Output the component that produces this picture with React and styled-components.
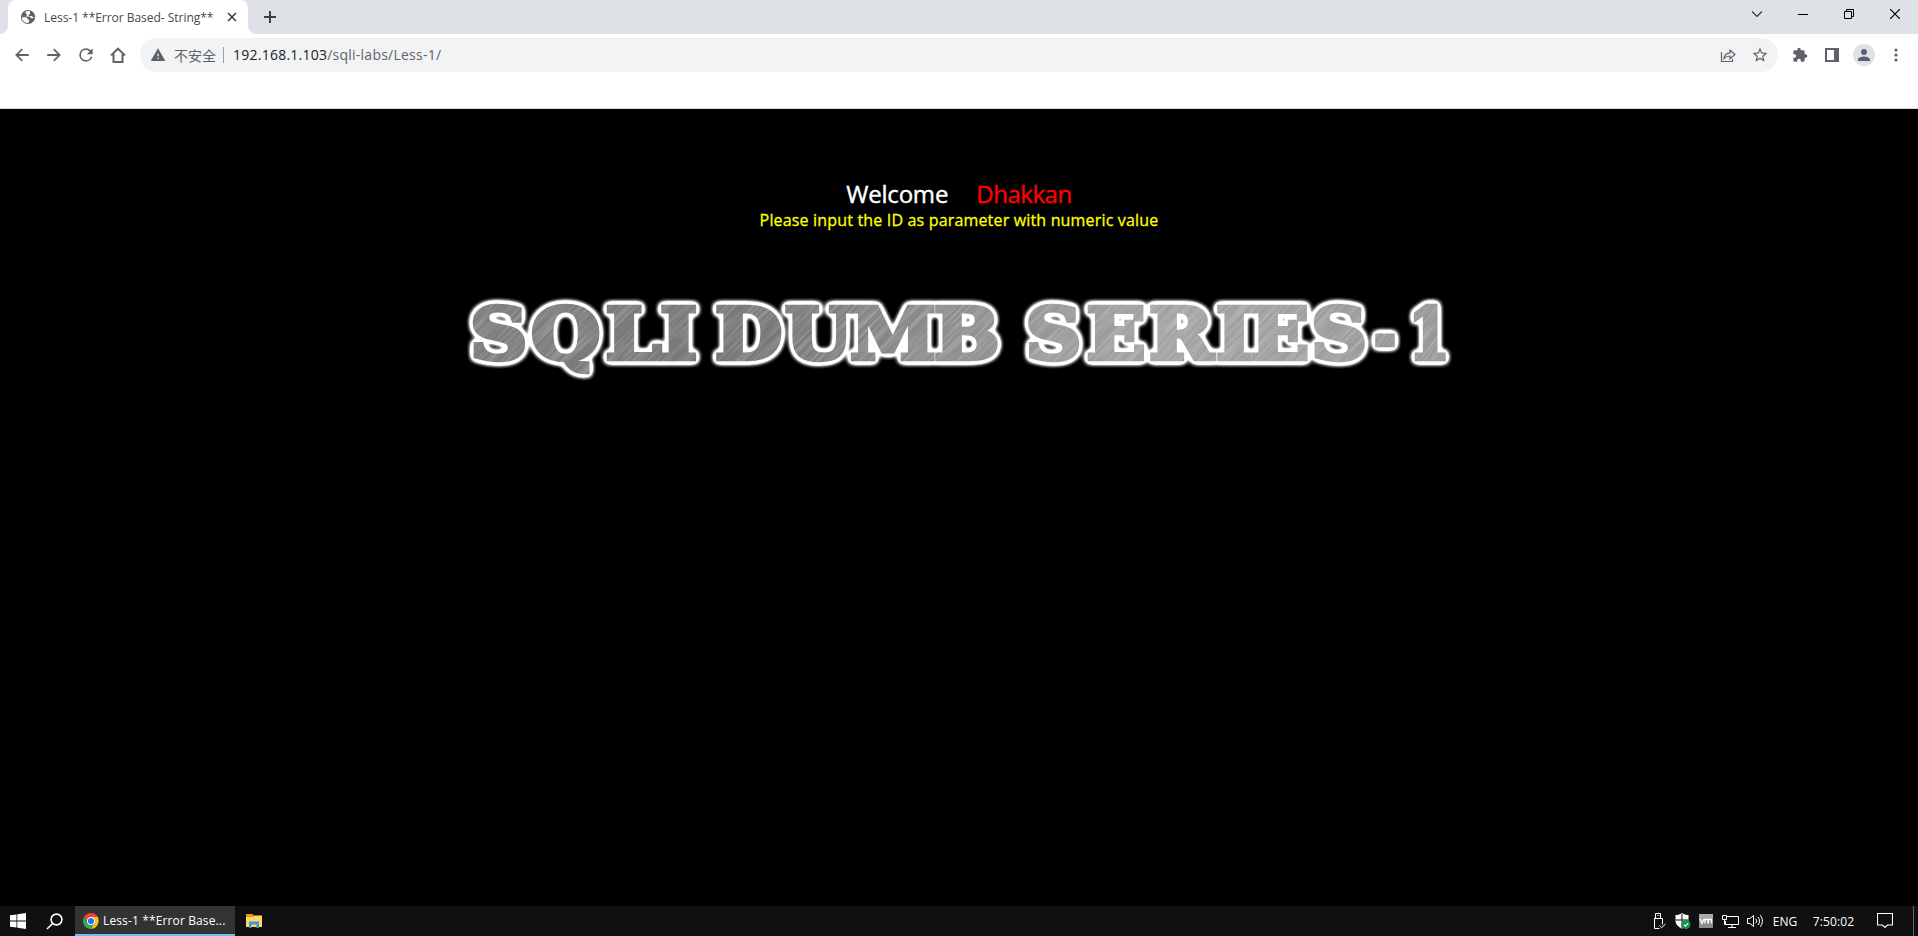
import React from 'react';
import styled, { createGlobalStyle } from 'styled-components';

const Global = createGlobalStyle`
  * { box-sizing: border-box; }
  html, body { margin: 0; padding: 0; background: #000; overflow: hidden; }
  body { font-family: "Open Sans", "Noto Sans", "Noto Sans CJK SC", sans-serif; }
  svg { display: block; flex: none; }
`;

const Screen = styled.div`
  display: flex;
  flex-direction: column;
  width: 100%;
  height: 100vh;
  min-height: 936px;
`;

const TabStrip = styled.header`
  display: flex;
  height: 34px;
  padding-left: 8px;
  background: #dee1e6;
`;

const Tab = styled.div`
  position: relative;
  display: flex;
  align-items: center;
  width: 240px;
  height: 34px;
  padding: 0 9px 0 12px;
  background: #fff;
  border-radius: 8px 8px 0 0;
  &::before, &::after {
    content: '';
    position: absolute;
    bottom: 0;
    width: 8px;
    height: 8px;
  }
  &::before { left: -8px; background: radial-gradient(circle at 0 0, transparent 7.5px, #fff 8px); }
  &::after { right: -8px; background: radial-gradient(circle at 100% 0, transparent 7.5px, #fff 8px); }
`;

const TabTitle = styled.span`
  flex: 1;
  margin-left: 8px;
  font-size: 12px;
  line-height: 18px;
  letter-spacing: -0.03px;
  color: #45484c;
  white-space: nowrap;
  padding-top: 1px;
`;

const IconSlot = styled.span`
  display: flex;
  align-items: center;
  justify-content: center;
  flex: none;
  width: ${(p) => p.$w || 32}px;
  height: ${(p) => p.$h || 28}px;
  color: ${(p) => p.$color || '#5f6368'};
`;

const WindowControls = styled.div`
  display: flex;
  height: 28px;
  margin-left: auto;
`;

const Toolbar = styled.nav`
  display: flex;
  align-items: flex-start;
  height: 75px;
  padding: 4px 6px 0;
  background: #fff;
  border-bottom: 1px solid #dadce0;
`;

const NavButtons = styled.div`
  display: flex;
  align-items: center;
  width: 134px;
  height: 34px;
`;

const Omnibox = styled.div`
  display: flex;
  align-items: center;
  flex: 1;
  height: 34px;
  padding: 0 2px 0 10px;
  border-radius: 17px;
  background: #f1f3f4;
  color: #5f6368;
`;

const Insecure = styled.span`
  margin-left: 8px;
  padding-right: 7px;
  border-right: 1px solid #9aa0a6;
  font: 14px/16px "Noto Sans CJK SC", sans-serif;
  color: #5f6368;
  white-space: nowrap;
`;

const Url = styled.span`
  flex: 1;
  margin-left: 9px;
  font-size: 14px;
  line-height: 20px;
  letter-spacing: 0.24px;
  color: #5f6368;
  white-space: nowrap;
`;

const Host = styled.span`
  color: #202124;
`;

const Actions = styled.div`
  display: flex;
  align-items: center;
  height: 34px;
  margin-left: 6px;
`;

const Avatar = styled.span`
  display: flex;
  align-items: center;
  justify-content: center;
  width: 22px;
  height: 22px;
  border-radius: 50%;
  background: #dee1e6;
  color: #56617a;
`;

const Page = styled.main`
  display: flex;
  flex: 1;
  flex-direction: column;
  align-items: center;
  padding-top: 69px;
  background: #000;
`;

const Welcome = styled.div`
  display: flex;
  gap: 28px;
  font-size: 24px;
  letter-spacing: -0.2px;
  line-height: 32px;
  color: #fff;
  -webkit-text-stroke: 0.4px currentColor;
`;

const Name = styled.span`
  letter-spacing: -0.45px;
  color: #f00;
`;

const Hint = styled.div`
  font-size: 16px;
  line-height: 21px;
  letter-spacing: 0.17px;
  color: #ff0;
  -webkit-text-stroke: 0.3px currentColor;
`;

const Banner = styled.svg`
  margin-top: 54px;
  font-family: "DejaVu Serif", serif;
  font-weight: 700;
  font-size: 70.5px;
`;

const Taskbar = styled.footer`
  display: flex;
  align-items: center;
  height: 30px;
  background: #101010;
  color: #fff;
`;

const Task = styled.div`
  display: flex;
  align-items: center;
  width: 160px;
  height: 30px;
  padding: 1px 0 0 8px;
  gap: 4px;
  background: #333;
  border-bottom: 2px solid #76b9ed;
  font-size: 12px;
  letter-spacing: 0.13px;
  white-space: nowrap;
`;

const Tray = styled.div`
  display: flex;
  align-items: center;
  height: 30px;
  margin-left: auto;
  font-size: 12px;
`;

const TrayText = styled.span`
  width: ${(p) => p.$w}px;
  text-align: center;
  letter-spacing: 0.1px;
  white-space: nowrap;
`;

const PeekEdge = styled.span`
  width: 5px;
  height: 30px;
  border-left: 1px solid #6a6a6a;
`;

const Glyph = ({ d, size = 20 }) => (
  <svg width={size} height={size} viewBox="0 0 24 24" fill="currentColor"><path d={d} /></svg>
);

const icons = {
  back: 'M21 10.700H7.400l5.700-5.700L11.500 3.400 2.800 12l8.700 8.600 1.600-1.600-5.700-5.700H21z',
  forward: 'M3 13.300h13.600l-5.700 5.700 1.600 1.600L21.200 12l-8.700-8.600-1.600 1.600 5.700 5.700H3z',
  reload: 'M17.65 6.35A7.96 7.96 0 0 0 12 4a8 8 0 1 0 7.73 10h-2.08A6 6 0 1 1 12 6c1.66 0 3.14.69 4.22 1.78L13 11h7V4z',
  star: 'M22 9.24l-7.19-.62L12 2 9.19 8.63 2 9.24l5.46 4.73L5.82 21 12 17.27 18.18 21l-1.63-7.03zM12 15.4l-3.76 2.27 1-4.28-3.32-2.88 4.38-.38L12 6.1l1.71 4.04 4.38.38-3.32 2.88 1 4.28z',
  warn: 'M1 21h22L12 2zm12-3h-2v-2h2zm0-4h-2v-4h2z',
  puzzle: 'M20.5 11H19V7a2 2 0 0 0-2-2h-4V3.5a2.5 2.5 0 0 0-5 0V5H4a2 2 0 0 0-2 2v3.8h1.5a2.7 2.7 0 0 1 0 5.4H2V20a2 2 0 0 0 2 2h3.8v-1.5a2.7 2.7 0 0 1 5.4 0V22H17a2 2 0 0 0 2-2v-4h1.5a2.5 2.5 0 0 0 0-5z',
  person: 'M12 12a4 4 0 1 0 0-8 4 4 0 0 0 0 8zm0 2c-2.67 0-8 1.34-8 4v2h16v-2c0-2.66-5.33-4-8-4z',
};

const Globe = () => (
  <svg width="16" height="16" viewBox="0 0 16 16">
    <circle cx="8" cy="8" r="7.1" fill="#5f6368" />
    <path d="M1.900 8.300h3.300c1.700 0 2.300.9 2.300 2.200h1.600v1.700c0 .8-.8.9-1 1.900C4.400 14.100 1.900 11.500 1.900 8.300z" fill="#fff" />
    <path d="M8 2c-.9 0-1.700.2-2.400.5v1.300c0 .8.700 1.200 1.500 1.200v1.400c-1 0-1.400.5-1.400 1.200h3.700c1.100 0 1.400.8 1.400 1.700h1.300c.9 0 1.500-.5 1.900-.8C14.200 5 11.500 2 8 2z" fill="#fff" />
    <path d="M10 2v2.300c0 1-.7 1.400-1.400 1.600v1.200h2.900c.8 0 1 .6 1.100 1.200H15C15 5 12.500 2.500 10 2z" fill="#5f6368" />
  </svg>
);

const Chrome = () => (
  <svg width="16" height="16" viewBox="0 0 48 48">
    <path d="M24 12h20.800A24 24 0 0 0 3.200 12L14 30z" fill="#ea4335" />
    <path d="M34 30L24 48c16 0 28-18 20.800-36H24z" fill="#fbc116" />
    <path d="M14 30L3.200 12A24 24 0 0 0 24 48l10-18z" fill="#34a853" />
    <circle cx="24" cy="24" r="12" fill="#fff" />
    <circle cx="24" cy="24" r="9.300" fill="#2674f2" />
  </svg>
);

/* A run of letters; `at` lists the left edge of each glyph, `stretch` widens them. */
const Run = ({ children, at, stretch = 1 }) => (
  <text transform={`scale(${stretch} 1)`} y="359.300" x={at.map((v) => (v / stretch).toFixed(2)).join(' ')}>{children}</text>
);

const MetalBanner = () => (
  <Banner width="1000" height="100" viewBox="459 285 1000 100">
    <defs>
      <filter id="grain" x="0" y="0" width="100%" height="100%">
        <feTurbulence type="fractalNoise" baseFrequency=".02 .45" numOctaves="2" seed="4" />
        <feColorMatrix values="0 0 0 0 1  0 0 0 0 1  0 0 0 0 1  1.200 0 0 0 -.450" />
      </filter>
      <linearGradient id="steel" gradientUnits="userSpaceOnUse" x1="0" y1="0" x2="1000" y2="0">
        <stop offset="0" stopColor="#7c7c7c" />
        <stop offset=".3" stopColor="#777" />
        <stop offset=".42" stopColor="#888" />
        <stop offset=".65" stopColor="#a2a2a2" />
        <stop offset="1" stopColor="#969696" />
      </linearGradient>
      <pattern id="brushed" patternUnits="userSpaceOnUse" x="400" y="285" width="1600" height="100">
        <rect width="1600" height="100" fill="url(#steel)" />
        <g transform="rotate(-48 800 50)">
          <rect x="0" y="-800" width="1600" height="1700" filter="url(#grain)" opacity=".45" />
        </g>
      </pattern>
      <filter id="halo" filterUnits="userSpaceOnUse" x="300" y="285" width="1200" height="100" colorInterpolationFilters="sRGB">
        <feGaussianBlur in="SourceAlpha" stdDeviation="3" />
        <feComponentTransfer><feFuncA type="linear" slope="6.500" intercept="-.05" /></feComponentTransfer>
        <feColorMatrix values="0 0 0 0 1  0 0 0 0 1  0 0 0 0 1  0 0 0 1 0" result="glow" />
        <feMerge><feMergeNode in="glow" /><feMergeNode in="SourceGraphic" /></feMerge>
      </filter>
    </defs>
    <g filter="url(#halo)" fill="url(#brushed)" stroke="url(#brushed)" strokeWidth="4.400">
      <Run stretch={1.13} at={[470, 531, 605.5, 660]}>SQLI</Run>
      <Run stretch={1.1} at={[715, 785, 850, 934]}>DUMB</Run>
      <Run stretch={1.1} at={[1025.5, 1086.500, 1149, 1216, 1250, 1311]}>SERIES</Run>
      <Run stretch={0.75} at={[1374]}>-</Run>
      <Run stretch={0.84} at={[1408.500]}>1</Run>
    </g>
  </Banner>
);

export default function App() {
  return (
    <Screen>
      <Global />
      <TabStrip>
        <Tab>
          <Globe />
          <TabTitle>Less-1 **Error Based- String**</TabTitle>
          <IconSlot $w={14} $color="#3c4043">
            <svg width="10" height="10" viewBox="0 0 10 10" stroke="currentColor" strokeWidth="1.600"><path d="M1 1l8 8M9 1L1 9" /></svg>
          </IconSlot>
        </Tab>
        <IconSlot $w={44} $h={28} $color="#3c4043">
          <svg width="12" height="12" viewBox="0 0 12 12" stroke="currentColor" strokeWidth="2" style={{ marginTop: 6 }}><path d="M6 0v12M0 6h12" /></svg>
        </IconSlot>
        <WindowControls>
          <IconSlot $w={46} $color="#333"><svg width="12" height="8" viewBox="0 0 12 8" fill="none" stroke="currentColor" strokeWidth="1.100"><path d="M1 1.500l5 5 5-5" /></svg></IconSlot>
          <IconSlot $w={46} $color="#000"><svg width="10" height="10" viewBox="0 0 10 10"><path d="M0 5h10v1H0z" /></svg></IconSlot>
          <IconSlot $w={46} $color="#000"><svg width="10" height="10" viewBox="0 0 10 10" fill="none" stroke="currentColor"><path d="M.5 2.500h7v7h-7zM2.500 2.500v-2h7v7h-2" /></svg></IconSlot>
          <IconSlot $w={46} $color="#000"><svg width="10" height="10" viewBox="0 0 10 10" stroke="currentColor" strokeWidth="1.200"><path d="M0 0l10 10M10 0L0 10" /></svg></IconSlot>
        </WindowControls>
      </TabStrip>
      <Toolbar>
        <NavButtons>
          <IconSlot><Glyph d={icons.back} size={18} /></IconSlot>
          <IconSlot><Glyph d={icons.forward} size={18} /></IconSlot>
          <IconSlot><Glyph d={icons.reload} size={20} /></IconSlot>
          <IconSlot>
            <svg width="16" height="16" viewBox="0 0 16 16" fill="none" stroke="currentColor" strokeWidth="2"><path d="M1 8.400L8 1.700l7 6.700M3.500 7v8h9V7" /></svg>
          </IconSlot>
        </NavButtons>
        <Omnibox>
          <Glyph d={icons.warn} size={16} />
          <Insecure>不安全</Insecure>
          <Url><Host>192.168.1.103</Host>/sqli-labs/Less-1/</Url>
          <IconSlot>
            <svg width="16" height="16" viewBox="0 0 16 16" fill="none" stroke="currentColor" strokeWidth="1.200"><path d="M1.500 5v9.500h11v-2.500" /><path d="M4 11.500c.3-3.500 2-5.500 6-5.700V3l5 4.500-5 4.200V9c-3 0-4.500.8-6 2.500z" /></svg>
          </IconSlot>
          <IconSlot><Glyph d={icons.star} size={18} /></IconSlot>
        </Omnibox>
        <Actions>
          <IconSlot><Glyph d={icons.puzzle} size={16} /></IconSlot>
          <IconSlot><svg width="14" height="14" viewBox="0 0 14 14"><path d="M0 0h14v14H0zM2 2v10h7V2z" fill="currentColor" fillRule="evenodd" /></svg></IconSlot>
          <IconSlot><Avatar><Glyph d={icons.person} size={18} /></Avatar></IconSlot>
          <IconSlot><svg width="4" height="14" viewBox="0 0 4 14" fill="currentColor"><circle cx="2" cy="2" r="1.600" /><circle cx="2" cy="7" r="1.600" /><circle cx="2" cy="12" r="1.600" /></svg></IconSlot>
        </Actions>
      </Toolbar>
      <Page>
        <Welcome><span>Welcome</span><Name>Dhakkan</Name></Welcome>
        <Hint>Please input the ID as parameter with numeric value</Hint>
        <MetalBanner />
      </Page>
      <Taskbar>
        <IconSlot $w={36} $color="#fff">
          <svg width="16" height="16" viewBox="0 0 16 16" fill="currentColor"><path d="M0 2.300l6.500-.9v6.100H0zM7.300 1.300L16 0v7.500H7.300zM0 8.400h6.500v6.200L0 13.700zM7.300 8.400H16V16l-8.700-1.300z" /></svg>
        </IconSlot>
        <IconSlot $w={36} $color="#fff">
          <svg width="17" height="17" viewBox="0 0 17 17" fill="none" stroke="currentColor" strokeWidth="1.600"><circle cx="10.500" cy="6.500" r="5.400" /><path d="M6.700 10.500L1 16" /></svg>
        </IconSlot>
        <IconSlot $w={3} />
        <Task><Chrome /><span>Less-1 **Error Base...</span></Task>
        <IconSlot $w={38}>
          <svg width="16" height="14" viewBox="0 0 16 14"><path d="M0 0h6.500l1.500 2v2H0z" fill="#dda013" /><path d="M0 3h7l1-1.500h8V13H0z" fill="#ffd767" /><path d="M3 14V7.500h10V14h-2.500v-3.500h-5V14z" fill="#3c96df" /></svg>
        </IconSlot>
        <Tray>
          <IconSlot $w={23} $color="#fff">
            <svg width="13" height="16" viewBox="0 0 13 16" fill="none" stroke="currentColor"><path d="M2.500 5V.5h5V5M1 5.500h8.500v6M1.500 5v10.500h5M6.500 12.500l2.200 2.200 3.800-3.700" /><path d="M4 2.500h.8M5.600 2.500h.8" /></svg>
          </IconSlot>
          <IconSlot $w={23}>
            <svg width="16" height="16" viewBox="0 0 16 16"><path d="M7 0c2 1.600 4 2 6.500 2v5.500c0 4-3 6.500-6.500 8-3.500-1.500-6.500-4-6.500-8V2C3 2 5 1.600 7 0z" fill="#fff" /><path d="M7 1v14M.5 7h13" stroke="#101010" /><circle cx="11" cy="11.500" r="4.500" fill="#179149" /><path d="M8.900 11.600l1.500 1.600 2.800-3" fill="none" stroke="#fff" strokeWidth="1.100" /></svg>
          </IconSlot>
          <IconSlot $w={24}>
            <svg width="14" height="14" viewBox="0 0 14 14"><path d="M0 0h14v14H0z" fill="#8c8c8c" /><path d="M0 0h14v4L0 7z" fill="#aaa" /><path d="M1 5l2 4.500L5 5M6 9.500V5.500h3v4M9.500 9.500v-4h3v4" fill="none" stroke="#fff" strokeWidth="1.300" /></svg>
          </IconSlot>
          <IconSlot $w={25} $color="#fff">
            <svg width="17" height="15" viewBox="0 0 17 15" fill="none" stroke="currentColor"><path d="M5 2.500h11.500v8H3.500V7M10 10.500v3M6 13.500h8M.5 1.500h4v4h-4zM2.500 5.500v5h2" /></svg>
          </IconSlot>
          <IconSlot $w={24} $color="#fff">
            <svg width="17" height="14" viewBox="0 0 17 14" fill="none" stroke="currentColor"><path d="M.5 4.500H3l3.500-3v11L3 9.500H.5zM8.700 4.800a3 3 0 0 1 0 4.400M11 3a6 6 0 0 1 0 8M13.300 1.200a9 9 0 0 1 0 11.600" /></svg>
          </IconSlot>
          <TrayText $w={36}>ENG</TrayText>
          <TrayText $w={61}>7:50:02</TrayText>
          <IconSlot $w={41} $color="#fff">
            <svg width="16" height="16" viewBox="0 0 16 16" fill="none" stroke="currentColor" strokeWidth="1.100"><path d="M.5.5h15v11.500h-5L8 14.500 5.500 12h-5z" /></svg>
          </IconSlot>
          <IconSlot $w={8} />
          <PeekEdge />
        </Tray>
      </Taskbar>
    </Screen>
  );
}
